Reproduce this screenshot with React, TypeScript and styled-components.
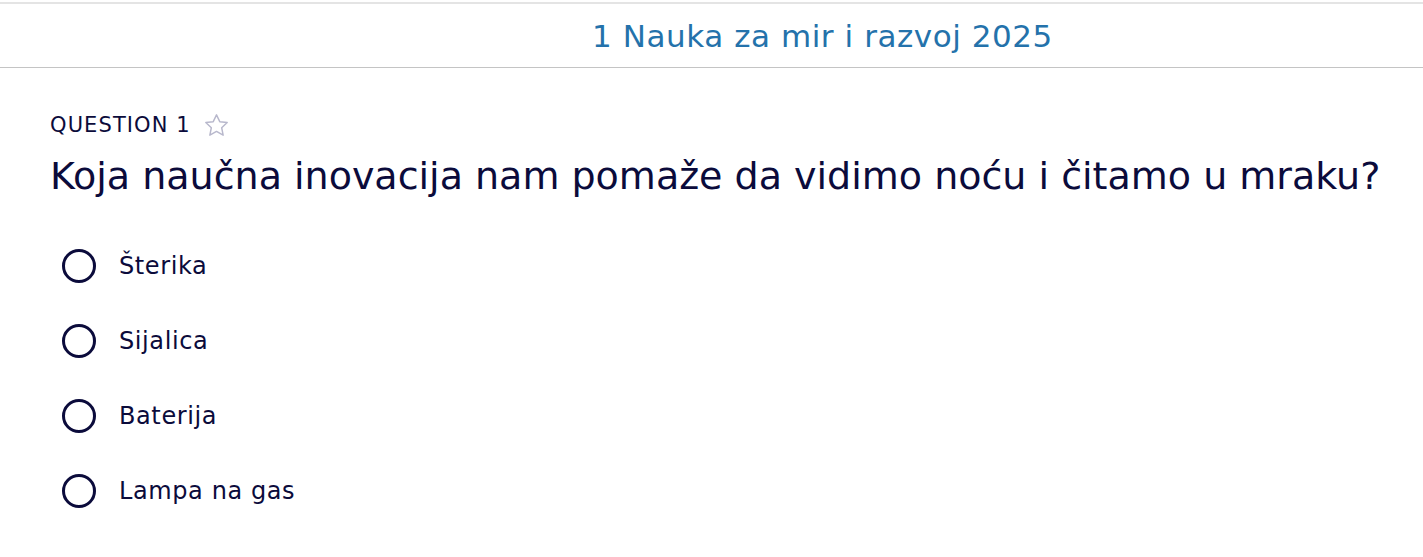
import React from "react";
import styled, { createGlobalStyle } from "styled-components";

const Global = createGlobalStyle`
  html, body { margin: 0; padding: 0; background: #ffffff; }
  body { font-family: "DejaVu Sans", Verdana, sans-serif; color: #0b0b3b; }
`;

const Page = styled.div`
  width: 1423px;
  min-height: 557px;
  border-top: 2px solid #e4e4e4;
  margin-top: 2px;
  box-sizing: border-box;
`;

const Header = styled.header`
  height: 63px;
  border-bottom: 1px solid #c4c4c4;
  display: flex;
  align-items: center;
  justify-content: center;
  padding-left: 222px;
`;

const Title = styled.h1`
  margin: 0;
  font-size: 31px;
  line-height: 36px;
  font-weight: normal;
  color: #2472ab;
  letter-spacing: 0.55px;
`;

const Main = styled.main`
  padding: 45px 0 0 50px;
`;

const Label = styled.div`
  display: flex;
  align-items: center;
  gap: 12px;
  height: 24px;
  font-size: 21px;
  line-height: 24px;
  letter-spacing: 1.1px;
  color: #0b0b3b;
  text-transform: uppercase;
`;

const Question = styled.h2`
  margin: 16px 0 50px;
  font-size: 38px;
  line-height: 46px;
  font-weight: normal;
  white-space: nowrap;
  color: #0b0b3b;
`;

const Options = styled.div`
  display: flex;
  flex-direction: column;
  gap: 41px;
  padding-left: 12px;
`;

const Option = styled.label`
  display: flex;
  align-items: center;
  gap: 23px;
  height: 34px;
  font-size: 24px;
  letter-spacing: 0.6px;
  color: #0b0b3b;
  cursor: pointer;
`;

const Radio = styled.span`
  width: 28px;
  height: 28px;
  border: 3px solid #0b0b3b;
  border-radius: 50%;
  flex-shrink: 0;
`;

const Star = () => (
  <svg width="27" height="27" viewBox="0 0 24 24" fill="none" stroke="#b8b8cc" strokeWidth="1.3" strokeLinejoin="round">
    <path d="M12 2.5l2.9 6.1 6.6.8-4.9 4.6 1.3 6.6L12 17.3l-5.9 3.3 1.3-6.6-4.9-4.6 6.6-.8z" />
  </svg>
);

const options = ["Šterika", "Sijalica", "Baterija", "Lampa na gas"];

export default function App() {
  return (
    <Page>
      <Global />
      <Header>
        <Title>1 Nauka za mir i razvoj 2025</Title>
      </Header>
      <Main>
        <Label>
          Question 1 <Star />
        </Label>
        <Question>Koja naučna inovacija nam pomaže da vidimo noću i čitamo u mraku?</Question>
        <Options>
          {options.map((o) => (
            <Option key={o}>
              <Radio />
              {o}
            </Option>
          ))}
        </Options>
      </Main>
    </Page>
  );
}
